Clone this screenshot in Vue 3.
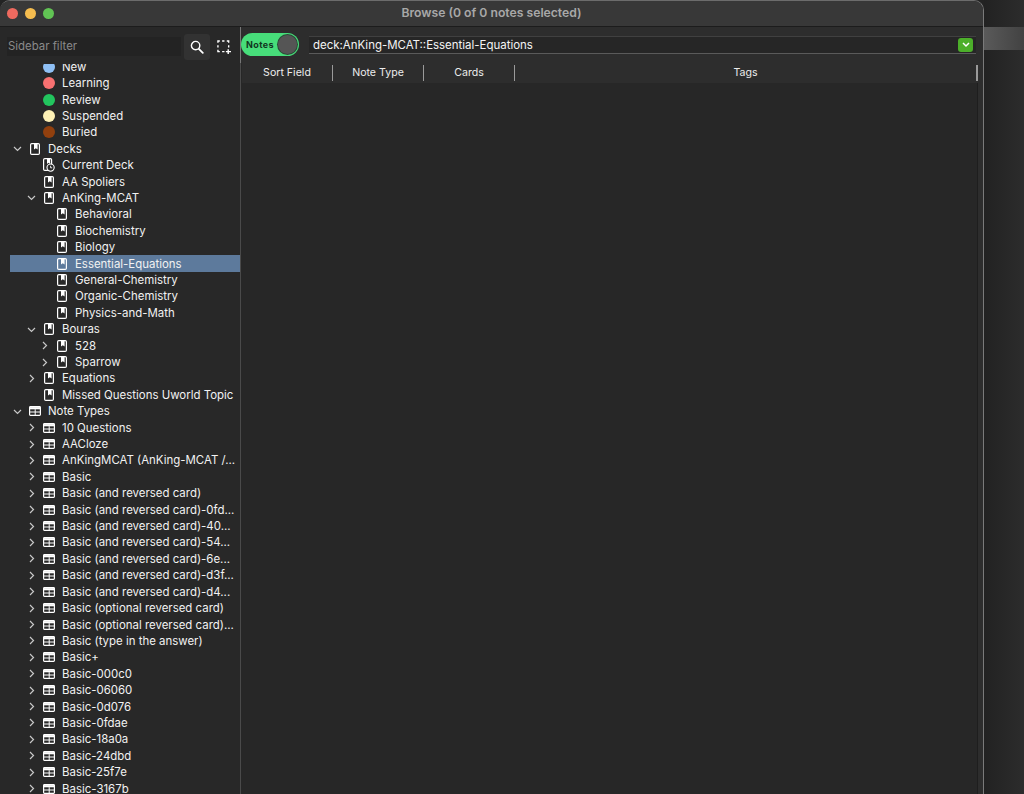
<template>
  <div class="desktop">
    <div class="window">
      <header class="titlebar">
        <div class="lights">
          <span class="light red"></span>
          <span class="light yellow"></span>
          <span class="light green"></span>
        </div>
        <div class="title">Browse (0 of 0 notes selected)</div>
      </header>

      <div class="body">
        <aside class="sidebar">
          <div class="filter-row">
            <div class="filter-input">Sidebar filter</div>
            <button class="tool-btn active">
              <svg width="14" height="14" viewBox="0 0 14 14" fill="none" stroke="#fff" stroke-width="1.4" stroke-linecap="round">
                <circle cx="5.6" cy="5.6" r="4.2" />
                <path d="M8.8 8.8 12.8 12.8" stroke-width="1.8" />
              </svg>
            </button>
            <button class="tool-btn select">
              <svg width="14" height="14" viewBox="0 0 15 15" fill="none" stroke="#fff" stroke-width="1.5">
                <path d="M1 3V1H3M5.5 1H8M10.5 1H12.5V3M12.5 5.5V8M1 5.5V8M1 10.5V12.5H3M5.5 12.5H8" />
                <path d="M12 10V15M9.5 12.5H15" />
              </svg>
            </button>
          </div>

          <div class="tree">
            <div
              v-for="row in rows"
              :key="row.label"
              class="row"
              :class="['lvl' + row.level, { selected: row.selected }]"
            >
              <span class="chevron">
                <svg v-if="row.arrow" width="9" height="9" viewBox="0 0 9 9" fill="none" stroke="#c8c8c8" stroke-width="1.2">
                  <path v-if="row.arrow === 'down'" d="M1 3 4.5 6.5 8 3" />
                  <path v-else d="M3 1 6.5 4.5 3 8" />
                </svg>
              </span>
              <span class="icon">
                <span v-if="row.dot" class="dot" :style="{ background: row.dot }"></span>
                <svg v-else-if="row.icon === 'deck'" width="10" height="12" viewBox="0 0 10 12">
                  <rect x="0.6" y="0.6" width="8.8" height="10.8" rx="1.2" fill="none" stroke="#fff" stroke-width="1.2" />
                  <path d="M4 1H7.6V6.6L5.8 5.2 4 6.6Z" fill="#fff" />
                </svg>
                <svg v-else-if="row.icon === 'current'" width="13" height="14" viewBox="0 0 13 14">
                  <rect x="1.6" y="0.6" width="8" height="11.8" rx="1.2" fill="none" stroke="#fff" stroke-width="1.2" />
                  <path d="M5 1H8.2V6L6.6 4.8 5 6Z" fill="#fff" />
                  <circle cx="8.6" cy="9.6" r="3.6" fill="#282828" stroke="#fff" stroke-width="1.1" />
                  <path d="M8.6 7.8V9.8H10.2" fill="none" stroke="#fff" stroke-width="0.9" />
                </svg>
                <svg v-else width="12" height="10" viewBox="0 0 12 10" fill="none" stroke="#fff">
                  <rect x="0.6" y="0.6" width="10.8" height="8.8" rx="0.8" stroke-width="1.2" />
                  <path d="M0.6 2.2H11.4" stroke-width="2.2" />
                  <path d="M0.6 6H11.4M6.2 3.2V9.4" stroke-width="1" />
                </svg>
              </span>
              <span class="label">{{ row.label }}</span>
            </div>
          </div>
        </aside>

        <main class="main">
          <div class="search-row">
            <div class="toggle">
              <span class="toggle-text">Notes</span>
              <span class="knob"></span>
            </div>
            <div class="search-box">
              <span class="search-text">deck:AnKing-MCAT::Essential-Equations</span>
              <span class="drop-btn">
                <svg width="8" height="6" viewBox="0 0 8 6" fill="none" stroke="#fff" stroke-width="1.5">
                  <path d="M1 1 4 4 7 1" />
                </svg>
              </span>
            </div>
          </div>
          <div class="table">
            <div class="table-head">
              <div class="col narrow">Sort Field</div>
              <div class="col narrow">Note Type</div>
              <div class="col narrow">Cards</div>
              <div class="col wide">Tags</div>
            </div>
          </div>
        </main>
      </div>
    </div>

    <div class="behind">
      <div class="behind-bar"></div>
    </div>
  </div>
</template>

<script setup>
const status = [
  ['New', '#8fc0f5'],
  ['Learning', '#f87171'],
  ['Review', '#22c55e'],
  ['Suspended', '#fdf0b5'],
  ['Buried', '#92400e']
]

const decks = [
  { label: 'Decks', level: 0, arrow: 'down', icon: 'deck' },
  { label: 'Current Deck', level: 1, icon: 'current' },
  { label: 'AA Spoliers', level: 1, icon: 'deck' },
  { label: 'AnKing-MCAT', level: 1, arrow: 'down', icon: 'deck' },
  { label: 'Behavioral', level: 2, icon: 'deck' },
  { label: 'Biochemistry', level: 2, icon: 'deck' },
  { label: 'Biology', level: 2, icon: 'deck' },
  { label: 'Essential-Equations', level: 2, icon: 'deck', selected: true },
  { label: 'General-Chemistry', level: 2, icon: 'deck' },
  { label: 'Organic-Chemistry', level: 2, icon: 'deck' },
  { label: 'Physics-and-Math', level: 2, icon: 'deck' },
  { label: 'Bouras', level: 1, arrow: 'down', icon: 'deck' },
  { label: '528', level: 2, arrow: 'right', icon: 'deck' },
  { label: 'Sparrow', level: 2, arrow: 'right', icon: 'deck' },
  { label: 'Equations', level: 1, arrow: 'right', icon: 'deck' },
  { label: 'Missed Questions Uworld Topic', level: 1, icon: 'deck' }
]

const noteTypes = [
  '10 Questions',
  'AACloze',
  'AnKingMCAT (AnKing-MCAT /...',
  'Basic',
  'Basic (and reversed card)',
  'Basic (and reversed card)-0fd...',
  'Basic (and reversed card)-40...',
  'Basic (and reversed card)-54...',
  'Basic (and reversed card)-6e...',
  'Basic (and reversed card)-d3f...',
  'Basic (and reversed card)-d4...',
  'Basic (optional reversed card)',
  'Basic (optional reversed card)...',
  'Basic (type in the answer)',
  'Basic+',
  'Basic-000c0',
  'Basic-06060',
  'Basic-0d076',
  'Basic-0fdae',
  'Basic-18a0a',
  'Basic-24dbd',
  'Basic-25f7e',
  'Basic-3167b'
]

const rows = [
  ...status.map(([label, dot]) => ({ label, dot, level: 1 })),
  ...decks,
  { label: 'Note Types', level: 0, arrow: 'down', icon: 'table' },
  ...noteTypes.map((label) => ({ label, level: 1, arrow: 'right', icon: 'table' }))
]
</script>

<style scoped>
.desktop {
  display: flex;
  width: 1024px;
  height: 794px;
  overflow: hidden;
  background: #232323;
  font-family: Inter, "Liberation Sans", sans-serif;
  color: #fff;
}

.window {
  flex: 0 0 984px;
  display: flex;
  flex-direction: column;
  background: #282828;
  border-top: 1px solid #6c6c6c;
  border-right: 1px solid #7a7a7a;
  border-top-right-radius: 10px;
  border-top-left-radius: 10px;
  box-sizing: border-box;
  overflow: hidden;
}

.behind {
  flex: 1;
  background: linear-gradient(90deg, #222, #2c2c2c);
  padding-top: 27px;
}

.behind-bar {
  height: 23px;
  background: linear-gradient(90deg, #5a5a5a, #424242);
}

.titlebar {
  position: relative;
  flex: 0 0 25px;
  display: flex;
  align-items: center;
  justify-content: center;
  background: #383838;
  border-bottom: 1px solid #1c1c1c;
}

.lights {
  position: absolute;
  left: 7px;
  top: 7px;
  display: flex;
  gap: 7px;
}

.light {
  width: 11px;
  height: 11px;
  border-radius: 50%;
}

.red { background: #ee6a5f; }
.yellow { background: #f5bd4f; }
.green { background: #61c454; }

.title {
  font-size: 12.2px;
  font-weight: 600;
  color: #a8a8a8;
  margin-top: -3px;
}

.body {
  flex: 1;
  display: flex;
  min-height: 0;
}

.sidebar {
  flex: 0 0 241px;
  display: flex;
  flex-direction: column;
  padding-right: 1px;
  box-sizing: border-box;
  overflow: hidden;
  background:
    linear-gradient(#777, #777) right top / 1px 36px no-repeat,
    linear-gradient(#4a4a4a, #4a4a4a) right top / 1px 100% no-repeat;
}

.filter-row {
  flex: 0 0 37px;
  display: flex;
  align-items: center;
  padding: 2px 0 0 7px;
  box-sizing: border-box;
}

.filter-input {
  width: 174px;
  height: 19px;
  line-height: 19px;
  background: #232323;
  font-size: 11.4px;
  color: #8a8a8a;
  padding-left: 1px;
  box-sizing: border-box;
}

.tool-btn {
  width: 26px;
  height: 26px;
  margin-left: 3px;
  padding: 0;
  display: flex;
  align-items: center;
  justify-content: center;
  border: 0;
  border-radius: 3px;
  background: transparent;
}

.tool-btn.active {
  background: #323232;
}

.tool-btn.select {
  margin-left: 1px;
}

.tree {
  flex: 1;
  overflow: hidden;
}

.row {
  display: flex;
  align-items: center;
  height: 16.41px;
  margin-left: 10px;
  font-size: 11.45px;
  white-space: nowrap;
  color: #f2f2f2;
}

.row:first-child {
  margin-top: -5.5px;
}

.row.selected {
  background: #5d7a9c;
}

.lvl0 { padding-left: 3px; }
.lvl1 { padding-left: 17px; }
.lvl2 { padding-left: 30px; }

.chevron {
  flex: 0 0 9px;
  display: flex;
  align-items: center;
}

.icon {
  flex: 0 0 13px;
  margin-left: 6px;
  margin-right: 7px;
  display: flex;
  align-items: center;
  justify-content: center;
}

.dot {
  width: 12px;
  height: 12px;
  border-radius: 50%;
}

.main {
  flex: 1;
  display: flex;
  flex-direction: column;
  min-width: 0;
  background: #2d2d2d;
}

.search-row {
  flex: 0 0 36px;
  display: flex;
  align-items: center;
}

.toggle {
  flex: 0 0 58px;
  height: 23px;
  margin-top: -1px;
  display: flex;
  align-items: center;
  justify-content: space-between;
  padding: 0 2px 0 5px;
  box-sizing: border-box;
  border-radius: 12px;
  background: #47dd7a;
}

.toggle-text {
  font-size: 9px;
  font-weight: 700;
  letter-spacing: 0.4px;
  color: #12341f;
}

.knob {
  width: 19px;
  height: 19px;
  border-radius: 50%;
  background: #555;
  box-shadow: 0 0 0 1px #2c4a38;
}

.search-box {
  flex: 0 0 667px;
  height: 18px;
  margin: -1px 0 0 10px;
  display: flex;
  align-items: center;
  justify-content: space-between;
  padding: 0 3px 0 4px;
  box-sizing: border-box;
  background: #262626;
  border-top: 1px solid #404040;
  border-bottom: 1px solid #5a5a5a;
}

.search-text {
  font-size: 11.46px;
  color: #f4f4f4;
}

.drop-btn {
  width: 15px;
  height: 14px;
  display: flex;
  align-items: center;
  justify-content: center;
  border-radius: 3px;
  background: #4caf2a;
}

.table {
  flex: 1;
  width: 737px;
  background: #272727;
  border-right: 1px solid #1e1e1e;
  box-sizing: border-box;
}

.table-head {
  height: 20px;
  display: flex;
  background: #2d2d2d;
  font-size: 10.6px;
  font-weight: 400;
  color: #ececec;
  margin: 0 -1px 0 1px;
}

.col {
  display: flex;
  align-items: center;
  justify-content: center;
  padding-bottom: 2px;
  border-right: 1px solid #9a9a9a;
  box-sizing: border-box;
  margin: 2px 0;
}

.narrow { flex: 0 0 91px; }
.wide {
  flex: 1;
  border-right: 2px solid #9a9a9a;
}
</style>

<style>
html, body {
  margin: 0;
  background: #232323;
}
</style>
